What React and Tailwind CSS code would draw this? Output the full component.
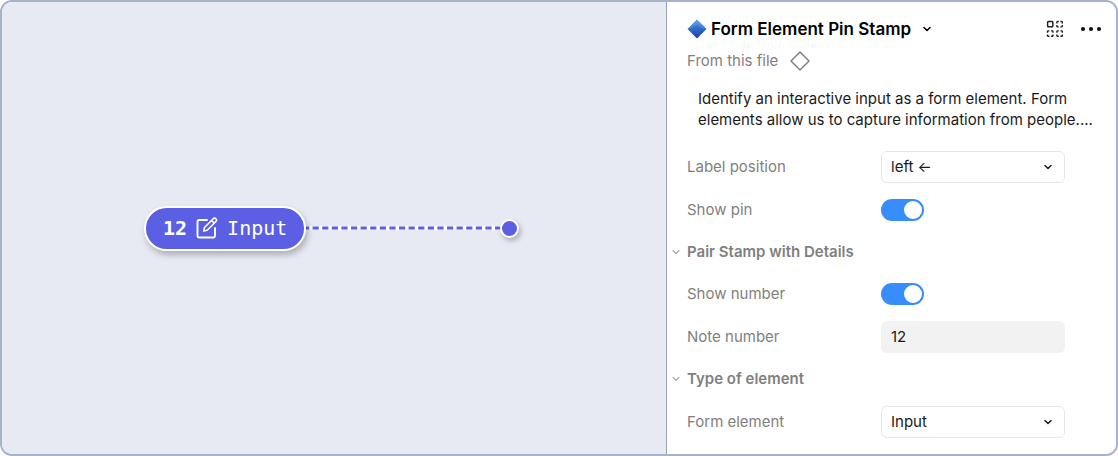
import { useState } from "react";

function Chevron({ className = "", width = 1.5 }) {
  return (
    <svg className={className} viewBox="0 0 8 8" width="8" height="8" fill="none" aria-hidden="true">
      <path d="M1 2.5 4 5.5 7 2.5" stroke="currentColor" strokeWidth={width} strokeLinecap="round" strokeLinejoin="round" />
    </svg>
  );
}

function BlueDiamond() {
  return (
    <svg className="shrink-0" width="20" height="20" viewBox="0 0 20 20" aria-hidden="true">
      <defs>
        <linearGradient id="diamond" x1="0" y1="0" x2="0" y2="1">
          <stop offset="0" stopColor="#4ea3e6" />
          <stop offset="0.4" stopColor="#3670cf" />
          <stop offset="1" stopColor="#1a3fa6" />
        </linearGradient>
      </defs>
      <path d="M10 .5 19.5 10 10 19.5.5 10Z" fill="url(#diamond)" />
      <path d="M10 1.5 1.5 10 5 9.3 10 5.2 15 9.3 18.5 10Z" fill="#7cc4f2" opacity=".25" />
    </svg>
  );
}

function GridIcon() {
  return (
    <svg width="18" height="18" viewBox="0 0 18 18" fill="none" stroke="#222" aria-hidden="true">
      <rect x="1.6" y="1.6" width="5.2" height="5.2" rx=".8" strokeWidth="1.5" />
      {[
        [10.2, 0.8],
        [0.8, 10.2],
        [10.2, 10.2],
      ].map(([x, y]) => (
        <path
          key={`${x}-${y}`}
          transform={`translate(${x} ${y})`}
          d="M.7 2.6V1.300a.6.6 0 0 1 .6-.6h1.300M4.200.7h1.300a.6.6 0 0 1 .6.6v1.300M6.100 4.200v1.300a.6.6 0 0 1-.6.6h-1.300M2.600 6.100h-1.300a.6.6 0 0 1-.6-.6v-1.300"
          strokeWidth="1.4"
        />
      ))}
    </svg>
  );
}

function Row({ label, id, children }) {
  return (
    <div className="flex items-center pl-5 pr-[51px]">
      <label htmlFor={id} className="grow text-[#7f7f7f]">{label}</label>
      <div className="flex w-46 shrink-0">{children}</div>
    </div>
  );
}

function Select({ id, options }) {
  return (
    <div className="relative w-full">
      <select id={id} className="h-8 w-full appearance-none rounded-md border border-[#e6e6e6] bg-white pl-[9px] pr-8 text-[#1a1a1a]">
        {options.map((o) => (
          <option key={o}>{o}</option>
        ))}
      </select>
      <Chevron className="pointer-events-none absolute right-[13px] top-3 text-[#222]" />
    </div>
  );
}

function Toggle({ id }) {
  const [on, setOn] = useState(true);
  return (
    <input
      id={id}
      type="checkbox"
      role="switch"
      checked={on}
      onChange={(e) => setOn(e.target.checked)}
      className="flex h-[22px] w-[43px] cursor-pointer appearance-none items-center rounded-full bg-[#b3b3b3] px-0.5 before:size-[18px] before:rounded-full before:bg-white before:content-[''] checked:justify-end checked:bg-[#378dfc]"
    />
  );
}

function Section({ title }) {
  return (
    <h2 className="flex items-center pl-[5px] font-semibold text-[#7f7f7f]">
      <button type="button" className="flex items-center gap-[7px]">
        <Chevron className="text-[#a6a6a6]" width={1.1} />
        {title}
      </button>
    </h2>
  );
}

function Canvas() {
  return (
    <main className="flex grow items-center bg-[#e7eaf3] pl-[142px]">
      <div className="z-10 flex h-[45px] shrink-0 items-center gap-2 rounded-full border-2 border-white bg-[#5b5fe3] px-[17px] font-['DejaVu_Sans_Mono',monospace] text-[20px] leading-6 text-white shadow-[2px_4px_6px_rgba(0,0,0,0.25)]">
        <span className="font-bold">12</span>
        <svg width="24" height="24" viewBox="0 0 24 24" fill="none" stroke="white" strokeWidth="1.9" strokeLinecap="round" strokeLinejoin="round" aria-hidden="true">
          <path d="M12 4H4a1.500 1.500 0 0 0-1.500 1.500v14.500A1.500 1.500 0 0 0 4 21.500h14.500a1.500 1.500 0 0 0 1.500-1.500V12" />
          <path d="m9.500 11.500 8.700-8.700a1.900 1.900 0 0 1 2.700 2.700L12.200 14.200 8.800 15.100Z M16.600 4.400l2.700 2.700" strokeWidth="1.6" />
        </svg>
        <span>Input</span>
      </div>
      <svg className="shrink-0" width="194" height="4" viewBox="0 0 194 4" aria-hidden="true">
        <rect width="194" height="4" fill="white" />
        <path d="M0 2h194" stroke="#5b5fe3" strokeWidth="3" strokeDasharray="6.200 3.400" strokeDashoffset="3" />
      </svg>
      <div className="z-10 size-[19px] shrink-0 rounded-full border-2 border-white bg-[#5b5fe3] shadow-[2px_3px_5px_rgba(0,0,0,0.25)]" />
    </main>
  );
}

export default function App() {
  return (
    <div className="bg-white">
      <div className="flex min-h-screen overflow-hidden rounded-xl border-2 border-[#a5b2c8] bg-white font-['Inter',sans-serif] text-[15px] leading-5">
        <Canvas />
        <aside className="w-[450px] shrink-0 border-l border-[#94a3bb] bg-white pb-2">
          <header className="flex items-center pl-5 pr-3.5 pt-[15px]">
            <h1 className="text-[17px] font-semibold leading-6 text-black">
              <button type="button" className="flex items-center gap-1">
                <BlueDiamond />
                Form Element Pin Stamp
                <Chevron className="ml-2" />
              </button>
            </h1>
            <div className="ml-auto flex items-center gap-4">
              <button type="button" aria-label="View variants">
                <GridIcon />
              </button>
              <button type="button" aria-label="More">
                <svg width="22" height="18" viewBox="0 0 22 18" fill="#111" aria-hidden="true">
                  <circle cx="3" cy="9" r="2.100" />
                  <circle cx="11" cy="9" r="2.100" />
                  <circle cx="19" cy="9" r="2.100" />
                </svg>
              </button>
            </div>
          </header>
          <p className="flex items-center gap-3 pl-5 pt-2.5 text-[#7f7f7f]">
            From this file
            <svg width="20" height="20" viewBox="0 0 20 20" fill="none" stroke="#7a7a7a" strokeWidth="1.400" strokeLinejoin="round" aria-hidden="true">
              <path d="M10 1 19 10 10 19 1 10Z" />
            </svg>
          </p>
          <p className="pl-[31px] pr-5 pt-[17px] leading-[21px] text-[#1a1a1a]">
            Identify an interactive input as a form element. Form elements allow us to capture information from people....
          </p>
          <form className="mt-4 grid h-[297px] grid-rows-7">
            <Row label="Label position" id="position">
              <Select id="position" options={["left ←", "right →", "top ↑", "bottom ↓"]} />
            </Row>
            <Row label="Show pin" id="pin">
              <Toggle id="pin" />
            </Row>
            <Section title="Pair Stamp with Details" />
            <Row label="Show number" id="show-number">
              <Toggle id="show-number" />
            </Row>
            <Row label="Note number" id="note">
              <input id="note" type="text" defaultValue="12" className="h-8 w-full rounded-md bg-[#f2f2f2] px-2.5 text-[#1a1a1a]" />
            </Row>
            <Section title="Type of element" />
            <Row label="Form element" id="element">
              <Select id="element" options={["Input", "Checkbox", "Radio"]} />
            </Row>
          </form>
        </aside>
      </div>
    </div>
  );
}
